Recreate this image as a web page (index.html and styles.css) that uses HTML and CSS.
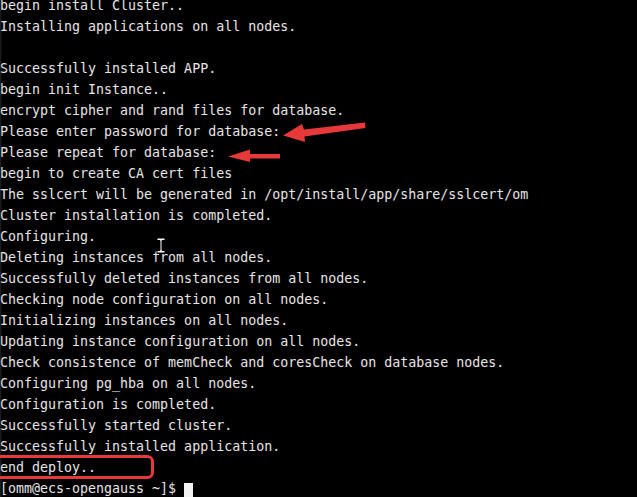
FILE: index.html
```html
<!DOCTYPE html>
<html>
<head>
<meta charset="utf-8">
<link rel="stylesheet" href="styles.css">
</head>
<body>
<div class="term">
<pre class="out">begin install Cluster..
Installing applications on all nodes.

Successfully installed APP.
begin init Instance..
encrypt cipher and rand files for database.
Please enter password for database:
Please repeat for database:
begin to create CA cert files
The sslcert will be generated in /opt/install/app/share/sslcert/om
Cluster installation is completed.
Configuring.
Deleting instances from all nodes.
Successfully deleted instances from all nodes.
Checking node configuration on all nodes.
Initializing instances on all nodes.
Updating instance configuration on all nodes.
Check consistence of memCheck and coresCheck on database nodes.
Configuring pg_hba on all nodes.
Configuration is completed.
Successfully started cluster.
Successfully installed application.
end deploy..
[omm@ecs-opengauss ~]$ <span class="cursor"> </span></pre>
<div class="edge"></div>
<svg class="marks" width="637" height="497" viewBox="0 0 637 497">
  <g fill="#e8393a" stroke="none">
    <path d="M365 122.5 L304 129.5 L302 124 L283 135.5 L305 142 L304.5 136.5 L365.5 128 Z"/>
    <path d="M280 154 L250 154 L250 149.5 L228 156.5 L250 162 L250 158.5 L280 158.5 Z"/>
  </g>
  <rect x="-4" y="456.5" width="156.5" height="21" rx="5" ry="5" fill="none" stroke="#e8393a" stroke-width="3"/>
  <g transform="translate(156.5,237.5)">
    <path d="M0.5 0.5 H8.5 V3 H5.5 V13 H8.5 V15.5 H0.5 V13 H3.5 V3 H0.5 Z" fill="#ffffff" stroke="#000000" stroke-width="1"/>
  </g>
</svg>
</div>
</body>
</html>
```
FILE: styles.css
```css
html, body {
  margin: 0;
  padding: 0;
  background: #000000;
  overflow: hidden;
}
.term {
  position: relative;
  width: 637px;
  height: 497px;
  overflow: hidden;
  background: #000000;
}
.out {
  margin: -5px 0 0 0;
  padding: 0;
  font-family: "DejaVu Sans Mono", monospace;
  font-size: 13.3px;
  line-height: 21px;
  color: #e6e6e6;
  white-space: pre;
}
.cursor {
  display: inline-block;
  width: 9px;
  height: 19px;
  background: #f2f2f2;
  vertical-align: -5px;
}
.edge {
  position: absolute;
  left: 0;
  top: 0;
  width: 2px;
  height: 497px;
  background: linear-gradient(to right, rgba(60,60,60,0.6), rgba(0,0,0,0));
}
.marks {
  position: absolute;
  left: 0;
  top: 0;
}
```
